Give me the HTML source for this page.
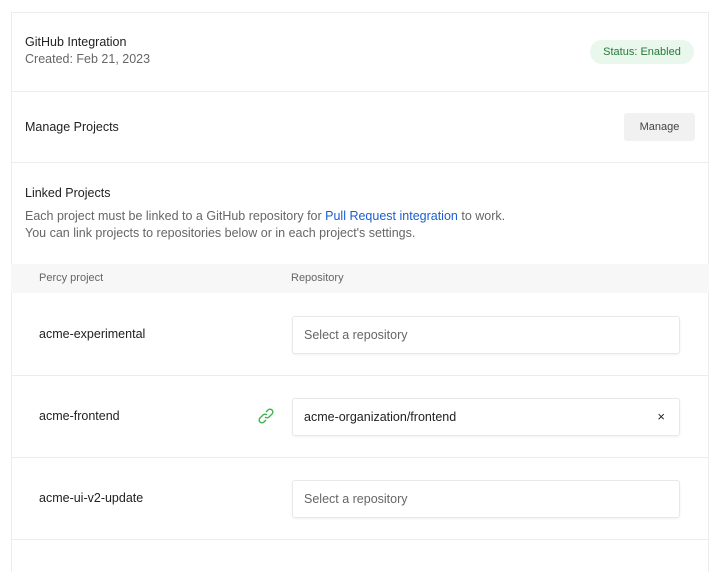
<!DOCTYPE html>
<html><head><style>
*{box-sizing:border-box;margin:0;padding:0}
body{width:720px;height:551px;background:#fff;font-family:"Liberation Sans",sans-serif;font-size:12.5px;color:#222;position:relative;overflow:hidden}
.card{position:absolute;left:11px;top:12px;width:698px;height:560px;border:1px solid #ececec;border-bottom:none}
.hr{position:absolute;left:11px;width:698px;height:1px;background:#ececec}
.t{position:absolute;white-space:nowrap}
.g{color:#666}
.inp{position:absolute;left:292px;width:388px;height:38px;border:1px solid #e8e8e8;border-radius:3px;box-shadow:0 1px 2px rgba(0,0,0,.06);padding:0 11px;line-height:36px;color:#666}
</style></head><body>
<div class="card"></div>
<div class="t" style="left:25px;top:35px">GitHub Integration</div>
<div class="t g" style="left:25px;top:52px">Created: Feb 21, 2023</div>
<div class="t" style="left:590px;top:40px;width:104px;height:24px;border-radius:12px;background:#eaf7ec;color:#237a3b;font-size:11px;line-height:24px;text-align:center">Status: Enabled</div>
<div class="hr" style="top:91px"></div>
<div class="t" style="left:25px;top:120px">Manage Projects</div>
<div class="t" style="left:624px;top:113px;width:71px;height:28px;background:#f1f1f1;border-radius:3px;color:#444;font-size:11px;line-height:28px;text-align:center">Manage</div>
<div class="hr" style="top:162px"></div>
<div class="t" style="left:25px;top:186px">Linked Projects</div>
<div class="t g" style="left:25px;top:209px">Each project must be linked to a GitHub repository for <span style="color:#1a5fd1">Pull Request integration</span> to work.</div>
<div class="t g" style="left:25px;top:226px">You can link projects to repositories below or in each project's settings.</div>
<div style="position:absolute;left:11px;top:264px;width:698px;height:29px;background:#f7f7f7"></div>
<div class="t g" style="left:39px;top:272px;font-size:11px">Percy project</div>
<div class="t g" style="left:291px;top:272px;font-size:11px">Repository</div>
<div class="t" style="left:39px;top:327px">acme-experimental</div>
<div class="inp" style="top:316px">Select a repository</div>
<div class="hr" style="top:375px"></div>
<div class="t" style="left:39px;top:409px">acme-frontend</div>
<svg style="position:absolute;left:257px;top:407px" width="18" height="18" viewBox="0 0 18 18" fill="none" stroke="#3bb54a" stroke-width="1.4"><path d="M9 5l2-2a2.8 2.8 0 014 4l-3 3a2.8 2.8 0 01-4 0"/><path d="M9 13l-2 2a2.8 2.8 0 01-4-4l3-3a2.8 2.8 0 014 0"/></svg>
<div class="inp" style="top:398px;color:#222">acme-organization/frontend<span style="position:absolute;right:14px;top:0;font-size:13px">×</span></div>
<div class="hr" style="top:457px"></div>
<div class="t" style="left:39px;top:491px">acme-ui-v2-update</div>
<div class="inp" style="top:480px">Select a repository</div>
<div class="hr" style="top:539px"></div>
</body></html>
